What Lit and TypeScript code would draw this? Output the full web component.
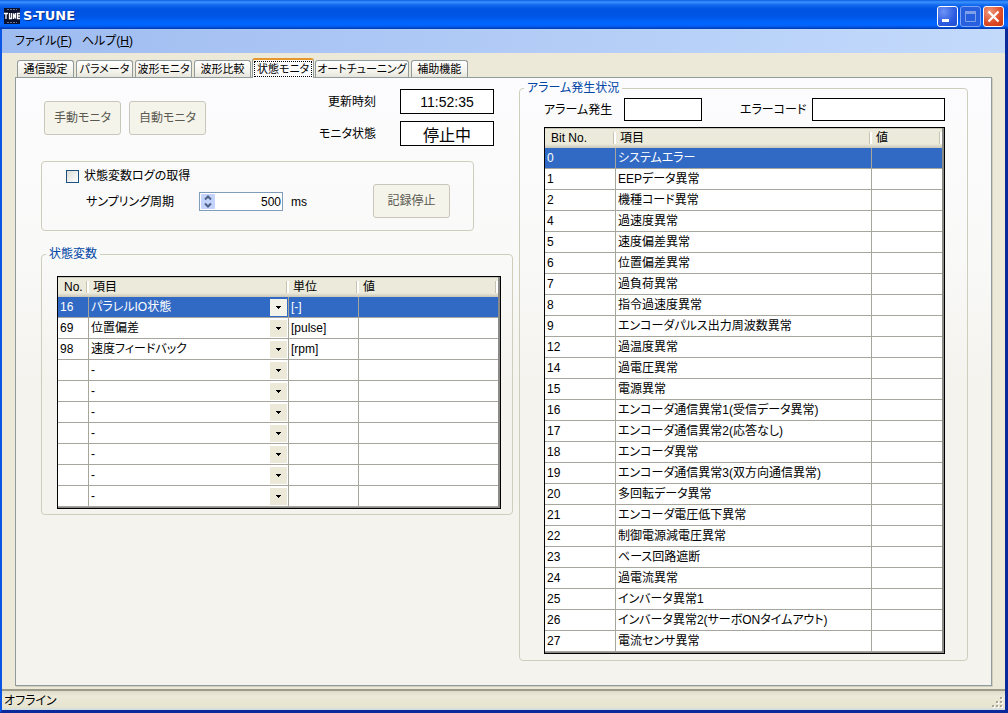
import { LitElement, html, css, svg } from "lit";
import { customElement, state } from "lit/decorators.js";
import { classMap } from "lit/directives/class-map.js";

interface Variable {
  no: string;
  item: string;
  unit: string;
}

const TABS = ["通信設定", "パラメータ", "波形モニタ", "波形比較", "状態モニタ", "オートチューニング", "補助機能"];

const VARIABLES: Variable[] = [
  { no: "16", item: "パラレルIO状態", unit: "[-]" },
  { no: "69", item: "位置偏差", unit: "[pulse]" },
  { no: "98", item: "速度フィードバック", unit: "[rpm]" },
  ...Array.from({ length: 7 }, () => ({ no: "", item: "-", unit: "" })),
];

const ITEMS = ["-", "パラレルIO状態", "位置偏差", "速度フィードバック"];

const ALARMS: [number, string][] = [
  [0, "システムエラー"],
  [1, "EEPデータ異常"],
  [2, "機種コード異常"],
  [4, "過速度異常"],
  [5, "速度偏差異常"],
  [6, "位置偏差異常"],
  [7, "過負荷異常"],
  [8, "指令過速度異常"],
  [9, "エンコーダパルス出力周波数異常"],
  [12, "過温度異常"],
  [14, "過電圧異常"],
  [15, "電源異常"],
  [16, "エンコーダ通信異常1(受信データ異常)"],
  [17, "エンコーダ通信異常2(応答なし)"],
  [18, "エンコーダ異常"],
  [19, "エンコーダ通信異常3(双方向通信異常)"],
  [20, "多回転データ異常"],
  [21, "エンコーダ電圧低下異常"],
  [22, "制御電源減電圧異常"],
  [23, "ベース回路遮断"],
  [24, "過電流異常"],
  [25, "インバータ異常1"],
  [26, "インバータ異常2(サーボONタイムアウト)"],
  [27, "電流センサ異常"],
];

@customElement("app-root")
export class AppRoot extends LitElement {
  @state() private tab = 4;
  @state() private variableRow = 0;
  @state() private alarmRow = 0;

  static styles = css`
    :host {
      display: block;
      font: 12px/16px "Liberation Sans", "Noto Sans CJK JP", sans-serif;
      font-feature-settings: "palt";
      color: #000;
    }
    * {
      box-sizing: border-box;
    }
    button,
    input,
    select {
      font: inherit;
      font-feature-settings: inherit;
      color: inherit;
      margin: 0;
      padding: 0;
      border-radius: 0;
      appearance: none;
      outline: none;
    }
    .window {
      display: flex;
      flex-direction: column;
      min-height: 100vh;
      background: #ece9d8;
      border-style: solid;
      border-width: 0 3px 3px 2px;
      border-color: #0a2a9c #0a2a9c #0a2a9c #0a55e4;
    }
    .titlebar {
      display: flex;
      align-items: center;
      height: 29px;
      margin: 0 -3px 0 -2px;
      padding: 3px 4px 0 4px;
      gap: 3px;
      background: linear-gradient(#0b5be0 0, #3a93ff 2px, #1268ee 5px, #0054e3 9px, #0055e5 16px, #0066ff 23px, #0062f8 26px, #0038b0 29px);
    }
    .title {
      flex: 1;
      margin: 0;
      font: bold 13px/16px "DejaVu Sans", sans-serif;
      color: #fff;
      text-shadow: 1px 1px #0a2f8a;
    }
    .caption {
      display: flex;
      gap: 2px;
    }
    .cap {
      display: grid;
      width: 21px;
      height: 21px;
      border: 1px solid #fff;
      border-radius: 3px;
      background: radial-gradient(circle at 30% 25%, #6d93f5, #2a5be0 60%, #1f4bd0);
    }
    .cap.max {
      border-color: #7ea3f2;
      background: #2660de;
    }
    .cap.close {
      background: radial-gradient(circle at 30% 25%, #f09a80, #dd4a26 60%, #c8390f);
    }
    .menu {
      display: flex;
      align-items: center;
      gap: 10px;
      height: 24px;
      padding: 0 13px;
      background: linear-gradient(90deg, #9fbcf1, #c3dafb);
    }
    .menu button {
      border: 0;
      background: none;
    }
    .body {
      flex: 1;
      display: flex;
      flex-direction: column;
      padding: 5px 13px 3px;
    }
    .tabs {
      display: flex;
      align-items: flex-end;
      gap: 2px;
      height: 20px;
      padding-left: 2px;
      z-index: 1;
      margin-bottom: -1px;
      font-size: 11px;
    }
    .tab {
      min-width: 57px;
      height: 17px;
      margin-bottom: 1px;
      line-height: 16px;
      white-space: nowrap;
      border: 1px solid #919b9c;
      border-bottom: 0;
      border-radius: 3px 3px 0 0;
      background: linear-gradient(#fff, #f2f1ea 70%, #e6e5dc);
    }
    .tab.on {
      height: 20px;
      margin: 0 -1px;
      padding: 0 1px 1px;
      border-top: 2px solid #e5972d;
      background: #fcfcfe;
    }
    .tab span {
      display: block;
      border: 1px solid transparent;
      line-height: 14px;
    }
    .tab.on span {
      border: 1px dotted #000;
      padding: 0 2px;
    }
    .page {
      flex: 1;
      display: grid;
      grid-template-columns: 472fr 449fr;
      align-items: start;
      gap: 6px;
      padding: 2px 23px 24px 25px;
      border: 1px solid #919b9c;
      box-shadow: 1px 1px #d0cebf;
      background: linear-gradient(#fcfcfe, #f9f9f8 30%, #f4f3ee 50%, #f4f3ee);
    }
    .left {
      display: flex;
      flex-direction: column;
      gap: 15px;
      padding-top: 9px;
    }
    .top {
      display: flex;
      align-items: center;
      gap: 8px;
      padding: 0 19px 0 3px;
    }
    .push {
      width: 77px;
      height: 34px;
      color: #5a5a52;
      background: #f5f4ea;
      border: 1px solid #c9c7ba;
      border-radius: 3px;
    }
    .readout {
      flex: 1;
      display: grid;
      grid-template-columns: 1fr 94px;
      align-items: center;
      gap: 7px 24px;
      text-align: right;
    }
    .field {
      min-width: 0;
      width: 100%;
      height: 23px;
      background: #fff;
      border: 1px solid #000;
    }
    .readout .field {
      height: 25px;
      font-size: 14px;
      text-align: center;
    }
    .readout .mode {
      font-size: 16px;
    }
    .group {
      min-width: 0;
      margin: 0;
      padding: 0;
      border: 1px solid #cfcebc;
      border-radius: 4px;
    }
    legend {
      margin-left: 4px;
      padding: 0 3px;
      color: #0046a5;
      line-height: 16px;
    }
    .log {
      display: flex;
      align-items: flex-start;
      width: 433px;
      max-width: 100%;
      height: 70px;
      padding: 6px 23px 12px 24px;
    }
    .log .push {
      align-self: flex-end;
    }
    .settings {
      flex: 1;
      display: grid;
      gap: 8px;
    }
    .check {
      display: flex;
      align-items: center;
      gap: 5px;
    }
    .check input {
      width: 13px;
      height: 13px;
      border: 1px solid #1c5180;
      background: linear-gradient(135deg, #dcdcd7, #fff);
    }
    .period {
      display: grid;
      grid-template-columns: 105px 84px auto;
      gap: 0 8px;
      align-items: center;
      padding-left: 20px;
    }
    .spin {
      display: flex;
      height: 19px;
      padding: 1px;
      background: #fff;
      border: 1px solid #7f9db9;
    }
    .spin svg {
      flex: none;
    }
    .spin input {
      flex: 1;
      min-width: 0;
      border: 0;
      background: none;
      text-align: right;
    }
    .vars {
      padding: 14px 11px 5px 15px;
    }
    .alarm {
      padding: 2px 22px 6px 24px;
    }
    .status {
      display: grid;
      grid-template-columns: 80px 78px 110px 1fr;
      align-items: center;
      margin-bottom: 6px;
    }
    .status .second {
      padding-left: 38px;
    }
    .sheet {
      padding: 0 2px 1px 0;
      border: 1px solid #000;
      background: #8a8a86;
    }
    table {
      width: 100%;
      table-layout: fixed;
      border-collapse: separate;
      border-spacing: 0;
      background: #fff;
    }
    th {
      height: 20px;
      padding: 0 0 1px 4px;
      font-weight: normal;
      line-height: 16px;
      text-align: left;
      white-space: nowrap;
      border-top: 1px solid #c8c6ba;
      background: linear-gradient(#ebeadb, #ebeadb 15px, #cbc7b8) 0 0 / 100% 100%;
      position: relative;
    }
    th:first-child {
      padding-left: 6px;
    }
    th::after {
      content: "";
      position: absolute;
      right: 0;
      top: 3px;
      width: 2px;
      height: 12px;
      border-left: 1px solid #c7c5b2;
      background: #fff;
    }
    td {
      height: 21px;
      padding: 0 2px;
      overflow: hidden;
      white-space: nowrap;
      border: solid #a6a69c;
      border-width: 0 1px 1px 0;
    }
    td:last-child {
      border-right-width: 0;
    }
    .sel td {
      background: #316ac5;
      color: #fff;
    }
    .no {
      width: 31px;
    }
    .item {
      width: 200px;
    }
    .unit {
      width: 70px;
    }
    .bit {
      width: 71px;
    }
    .name {
      width: 256px;
    }
    .combo {
      display: grid;
      grid-template-columns: 1fr 17px;
      align-items: center;
      height: 20px;
      margin-right: -1px;
    }
    .combo select {
      grid-area: 1 / 1 / 2 / 3;
      width: 100%;
      height: 20px;
      border: 0;
      background: none;
    }
    .combo option {
      color: #000;
    }
    .combo svg {
      grid-area: 1 / 2;
      pointer-events: none;
      background: #ece9d8;
    }
    .sel .combo svg {
      background: #f4f3ea;
    }
    .statusbar {
      display: flex;
      align-items: center;
      justify-content: space-between;
      height: 21px;
      padding-left: 2px;
      border-top: 2px solid #9c9a8b;
      background: linear-gradient(#dddbc9, #ece9d8 5px, #e6e5cf 16px, #cfdbe4 19px);
    }
    .grip {
      align-self: flex-end;
    }
  `;

  private arrow() {
    return html`<svg width="17" height="17" viewBox="0 0 17 17" aria-hidden="true">
      <path d="M6 7h5v1h-1v1h-1v1h-1v-1h-1v-1h-1z" fill="#000" />
    </svg>`;
  }

  private variables() {
    return html`<div class="sheet">
      <table>
        <thead>
          <tr>
            <th class="no">No.</th>
            <th class="item">項目</th>
            <th class="unit">単位</th>
            <th>値</th>
          </tr>
        </thead>
        <tbody>
          ${VARIABLES.map(
            (v, i) => html`<tr class=${classMap({ sel: i === this.variableRow })} @click=${() => (this.variableRow = i)}>
              <td>${v.no}</td>
              <td>
                <div class="combo">
                  <select aria-label="項目">
                    ${ITEMS.map((o) => html`<option ?selected=${o === v.item}>${o}</option>`)}
                  </select>
                  ${this.arrow()}
                </div>
              </td>
              <td>${v.unit}</td>
              <td></td>
            </tr>`,
          )}
        </tbody>
      </table>
    </div>`;
  }

  private alarms() {
    return html`<div class="sheet">
      <table>
        <thead>
          <tr>
            <th class="bit">Bit No.</th>
            <th class="name">項目</th>
            <th>値</th>
          </tr>
        </thead>
        <tbody>
          ${ALARMS.map(
            ([bit, name], i) => html`<tr class=${classMap({ sel: i === this.alarmRow })} @click=${() => (this.alarmRow = i)}>
              <td>${bit}</td>
              <td>${name}</td>
              <td></td>
            </tr>`,
          )}
        </tbody>
      </table>
    </div>`;
  }

  render() {
    return html`<div class="window">
      <header class="titlebar">
        <svg width="16" height="16" viewBox="0 0 16 16" aria-hidden="true">
          <rect width="16" height="16" fill="#0b1230" />
          <path d="M3 1.500h10M3 14.500h10" stroke="#6f7688" stroke-dasharray="2 1" />
          <path d="M0 5.500h4M2 5v6M5.500 5v5.500h2V5M9.500 11V5.500l2 5V5M16 5.500h-2.500v5H16M13.500 8H16" fill="none" stroke="#fff" stroke-width="1.300" />
        </svg>
        <h1 class="title">S-TUNE</h1>
        <div class="caption">
          <button class="cap" aria-label="最小化">
            <svg width="19" height="19" viewBox="0 0 19 19"><path d="M4 12h7v3H4z" fill="#fff" /></svg>
          </button>
          <button class="cap max" aria-label="最大化" disabled>
            <svg width="19" height="19" viewBox="0 0 19 19">
              <path d="M4.500 4.500h10v10h-10z" fill="none" stroke="#7f9fea" />
              <path d="M4 4h11v3H4z" fill="#7f9fea" />
            </svg>
          </button>
          <button class="cap close" aria-label="閉じる">
            <svg width="19" height="19" viewBox="0 0 19 19">
              <path d="M4.500 4.500l10 10M14.500 4.500l-10 10" stroke="#fff" stroke-width="2.200" />
            </svg>
          </button>
        </div>
      </header>
      <nav class="menu">
        <button>ファイル(<u>F</u>)</button>
        <button>ヘルプ(<u>H</u>)</button>
      </nav>
      <main class="body">
        <div class="tabs" role="tablist">
          ${TABS.map(
            (t, i) => html`<button
              class=${classMap({ tab: true, on: i === this.tab })}
              role="tab"
              aria-selected=${i === this.tab}
              @click=${() => (this.tab = i)}
            ><span>${t}</span></button>`,
          )}
        </div>
        <section class="page">
          <div class="left">
            <div class="top">
              <button class="push" disabled>手動モニタ</button>
              <button class="push" disabled>自動モニタ</button>
              <div class="readout">
                <label for="time">更新時刻</label>
                <input id="time" class="field" readonly value="11:52:35" />
                <label for="state">モニタ状態</label>
                <input id="state" class="field mode" readonly value="停止中" />
              </div>
            </div>
            <div class="group log">
              <div class="settings">
                <label class="check"><input type="checkbox" />状態変数ログの取得</label>
                <div class="period">
                  <label for="period">サンプリング周期</label>
                  <div class="spin">
                    <svg width="14" height="15" viewBox="0 0 14 15" aria-hidden="true">
                      <rect width="14" height="15" rx="1" fill="#c3d3fb" />
                      <path d="M4 5.500l3-3 3 3M4 9.500l3 3 3-3" fill="none" stroke="#4d6185" stroke-width="2" />
                    </svg>
                    <input id="period" inputmode="numeric" value="500" />
                  </div>
                  <span>ms</span>
                </div>
              </div>
              <button class="push" disabled>記録停止</button>
            </div>
            <fieldset class="group">
              <legend>状態変数</legend>
              <div class="vars">${this.variables()}</div>
            </fieldset>
          </div>
          <fieldset class="group">
            <legend>アラーム発生状況</legend>
            <div class="alarm">
              <div class="status">
                <label for="alarm">アラーム発生</label>
                <input id="alarm" class="field" readonly />
                <label class="second" for="code">エラーコード</label>
                <input id="code" class="field" readonly />
              </div>
              ${this.alarms()}
            </div>
          </fieldset>
        </section>
      </main>
      <footer class="statusbar">
        <span>オフライン</span>
        <svg class="grip" width="14" height="14" viewBox="0 0 14 14" aria-hidden="true">
          ${[[9, 1], [5, 5], [9, 5], [1, 9], [5, 9], [9, 9]].map(
            ([x, y]) => svg`<rect x=${x + 1} y=${y + 1} width="2" height="2" fill="#fff" /><rect x=${x} y=${y} width="2" height="2" fill="#a9a695" />`,
          )}
        </svg>
      </footer>
    </div>`;
  }
}
